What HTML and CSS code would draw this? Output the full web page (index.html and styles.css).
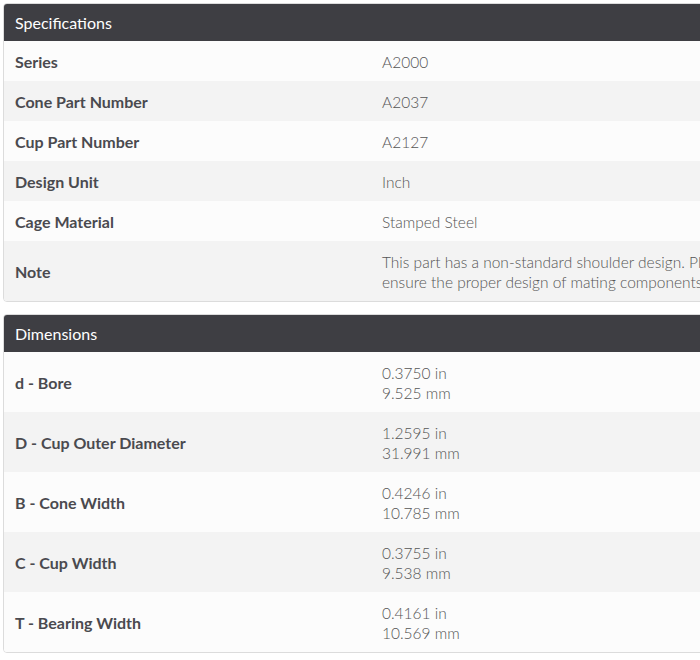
FILE: index.html
```html
<!DOCTYPE html>
<html>
<head>
<meta charset="utf-8">
<link rel="stylesheet" href="styles.css">
</head>
<body>
<div class="page">
  <section class="panel">
    <div class="panel-head">Specifications</div>
    <table class="spec">
      <colgroup><col class="c-label"><col></colgroup>
      <tr><th>Series</th><td>A2000</td></tr>
      <tr><th>Cone Part Number</th><td>A2037</td></tr>
      <tr><th>Cup Part Number</th><td>A2127</td></tr>
      <tr><th>Design Unit</th><td>Inch</td></tr>
      <tr><th>Cage Material</th><td>Stamped Steel</td></tr>
      <tr><th>Note</th><td class="nowrap">This part has a non-standard shoulder design. Please consult with a Timken engineer to<br>ensure the proper design of mating components.</td></tr>
    </table>
  </section>
  <section class="panel">
    <div class="panel-head">Dimensions</div>
    <table class="spec">
      <colgroup><col class="c-label"><col></colgroup>
      <tr><th>d - Bore</th><td>0.3750 in<br>9.525 mm</td></tr>
      <tr><th>D - Cup Outer Diameter</th><td>1.2595 in<br>31.991 mm</td></tr>
      <tr><th>B - Cone Width</th><td>0.4246 in<br>10.785 mm</td></tr>
      <tr><th>C - Cup Width</th><td>0.3755 in<br>9.538 mm</td></tr>
      <tr><th>T - Bearing Width</th><td>0.4161 in<br>10.569 mm</td></tr>
    </table>
  </section>
</div>
</body>
</html>
```
FILE: styles.css
```css
html, body {
  margin: 0;
  padding: 0;
  background: #ffffff;
  overflow: hidden;
}
body {
  font-family: Lato, "Liberation Sans", sans-serif;
  font-size: 15px;
}
.page {
  padding: 3px 0 0 3px;
  width: 780px;
}
.panel {
  border: 1px solid #dcdcdc;
  border-radius: 4px;
  overflow: hidden;
  margin-bottom: 12px;
}
.panel-head {
  background: #3e3e43;
  color: #ffffff;
  height: 37px;
  line-height: 37px;
  font-size: 16px;
  margin: -1px -1px 0 -1px;
  padding: 1px 11px 0 12px;
}
.spec {
  width: 100%;
  border-collapse: collapse;
  table-layout: fixed;
}
.c-label {
  width: 367px;
}
.spec th, .spec td {
  height: 20px;
  line-height: 20px;
  text-align: left;
  vertical-align: middle;
  padding: 11px 11px 9px 11px;
}
.spec th {
  font-weight: 700;
  font-size: 16px;
  color: #4a4a4f;
}
.spec td {
  font-weight: 300;
  font-size: 15.5px;
  color: #555555;
}
.spec tr:nth-child(odd) {
  background: #fcfcfc;
}
.spec tr:nth-child(even) {
  background: #f3f3f3;
}
.nowrap {
  white-space: nowrap;
}
```
